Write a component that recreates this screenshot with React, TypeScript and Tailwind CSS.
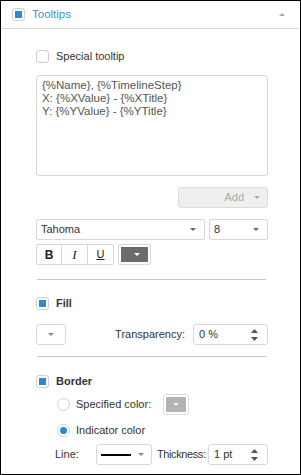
import React from "react";

function Down({ color = "#777", w = 7, h = 4 }: { color?: string; w?: number; h?: number }) {
  return (
    <svg width={w} height={h} viewBox={`0 0 ${w} ${h}`} className="block shrink-0">
      <path d={`M0 0H${w}L${w / 2} ${h}Z`} fill={color} />
    </svg>
  );
}
function Up({ color = "#777", w = 7, h = 4 }: { color?: string; w?: number; h?: number }) {
  return (
    <svg width={w} height={h} viewBox={`0 0 ${w} ${h}`} className="block shrink-0">
      <path d={`M0 ${h}H${w}L${w / 2} 0Z`} fill={color} />
    </svg>
  );
}

function Check({ on }: { on?: boolean }) {
  return (
    <div className="w-[13px] h-[13px] rounded-[3px] border border-[#cfcfcf] bg-white flex items-center justify-center shrink-0">
      {on && <div className="w-[7px] h-[7px] bg-[#2a8ad4]" />}
    </div>
  );
}

function Radio({ on }: { on?: boolean }) {
  return (
    <div className="w-[13px] h-[13px] rounded-full border border-[#d0d0d0] bg-white flex items-center justify-center shrink-0">
      {on && <div className="w-[7px] h-[7px] rounded-full bg-[#2a8ad4]" />}
    </div>
  );
}

function Spinner() {
  return (
    <div className="flex flex-col gap-[4px] items-center">
      <Up color="#555" w={7} h={4} />
      <Down color="#555" w={7} h={4} />
    </div>
  );
}

export default function App() {
  return (
    <div className="w-[301px] h-[475px] border border-black bg-white font-['Liberation_Sans',Arial,sans-serif] text-[11px] text-[#333] flex flex-col overflow-hidden">
      <div className="h-[28px] shrink-0 border-b border-[#dadada] flex items-center pl-[11px] pr-[15px]">
        <Check on />
        <span className="ml-[7px] text-[#3a93d8] text-[11.5px]">Tooltips</span>
        <div className="ml-auto">
          <Up color="#aaa" w={6} h={3} />
        </div>
      </div>

      <div className="flex flex-col pl-[35px] pr-[32px]">
        <div className="mt-[21px] h-[13px] flex items-center">
          <Check />
          <span className="ml-[7px]">Special tooltip</span>
        </div>

        <div className="mt-[12px] h-[101px] border border-[#d8d8d8] rounded-[3px] px-[5px] pt-[3px] leading-[13px] text-[11.5px] text-[#555]">
          <div>{"{%Name}, {%TimelineStep}"}</div>
          <div>{"X: {%XValue} - {%XTitle}"}</div>
          <div>{"Y: {%YValue} - {%YTitle}"}</div>
        </div>

        <div className="mt-[11px] self-end w-[90px] h-[21px] border border-[#dcdcdc] rounded-[3px] bg-[#efefef] flex items-center justify-end pr-[7px]">
          <span className="text-[#aaa] mr-[10px]">Add</span>
          <Down color="#aaa" w={6} h={3} />
        </div>

        <div className="mt-[11px] flex gap-[4px] h-[21px]">
          <div className="w-[169px] h-full border border-[#d8d8d8] rounded-[2px] flex items-center pl-[4px] pr-[8px]">
            <span>Tahoma</span>
            <div className="ml-auto"><Down color="#666" w={6} h={3} /></div>
          </div>
          <div className="flex-1 h-full border border-[#d8d8d8] rounded-[2px] flex items-center pl-[4px] pr-[8px]">
            <span>8</span>
            <div className="ml-auto"><Down color="#666" w={6} h={3} /></div>
          </div>
        </div>

        <div className="mt-[4px] flex h-[21px]">
          <div className="w-[78px] h-full border border-[#d8d8d8] rounded-[2px] flex">
            <div className="w-[25px] flex items-center justify-center border-r border-[#d8d8d8] font-bold text-[12px] text-[#222]">B</div>
            <div className="w-[26px] flex items-center justify-center border-r border-[#d8d8d8] italic font-['Liberation_Serif',serif] text-[13px] text-[#222]">I</div>
            <div className="flex-1 flex items-center justify-center underline text-[11px] text-[#222]">U</div>
          </div>
          <div className="ml-[4px] w-[33px] h-full border border-[#d8d8d8] rounded-[2px] p-[2px]">
            <div className="w-full h-full bg-[#6b6b6b] flex items-center justify-end pr-[8px]">
              <Down color="#fff" w={6} h={3} />
            </div>
          </div>
        </div>

        <div className="mt-[14px] h-px bg-[#c8c8c8] ml-[1px] mr-[2px]" />

        <div className="mt-[17px] h-[13px] flex items-center">
          <Check on />
          <span className="ml-[7px] font-bold">Fill</span>
        </div>

        <div className="mt-[14px] h-[21px] flex items-center">
          <div className="w-[30px] h-full border border-[#d8d8d8] rounded-[3px] flex items-center justify-center">
            <Down color="#888" w={6} h={3} />
          </div>
          <span className="ml-auto">Transparency:</span>
          <div className="ml-[8px] w-[75px] h-full border border-[#d8d8d8] rounded-[3px] flex items-center pl-[5px] pr-[9px]">
            <span>0 %</span>
            <div className="ml-auto"><Spinner /></div>
          </div>
        </div>

        <div className="mt-[11px] h-px bg-[#c8c8c8] ml-[1px] mr-[2px]" />

        <div className="mt-[18px] h-[13px] flex items-center">
          <Check on />
          <span className="ml-[7px] font-bold">Border</span>
        </div>

        <div className="mt-[6px] h-[21px] flex items-center pl-[21px]">
          <Radio />
          <span className="ml-[6px] w-[87px]">Specified color:</span>
          <div className="w-[26px] h-full border border-[#dcdcdc] rounded-[3px] p-[2px]">
            <div className="w-full h-full bg-[#b3b3b3] flex items-center justify-center">
              <Down color="#fff" w={6} h={3} />
            </div>
          </div>
        </div>

        <div className="mt-[5px] h-[21px] flex items-center pl-[21px]">
          <Radio on />
          <span className="ml-[6px]">Indicator color</span>
        </div>

        <div className="mt-[3px] h-[21px] flex items-center pl-[19px]">
          <span className="w-[41px]">Line:</span>
          <div className="w-[56px] h-full border border-[#d8d8d8] rounded-[3px] flex items-center pl-[4px] pr-[7px]">
            <div className="w-[30px] h-[2px] bg-black" />
            <div className="ml-auto"><Down color="#888" w={6} h={3} /></div>
          </div>
          <span className="ml-[5px] tracking-[-0.4px]">Thickness:</span>
          <div className="ml-auto w-[60px] h-full border border-[#d8d8d8] rounded-[3px] flex items-center pl-[5px] pr-[9px]">
            <span>1 pt</span>
            <div className="ml-auto"><Spinner /></div>
          </div>
        </div>
      </div>
    </div>
  );
}
